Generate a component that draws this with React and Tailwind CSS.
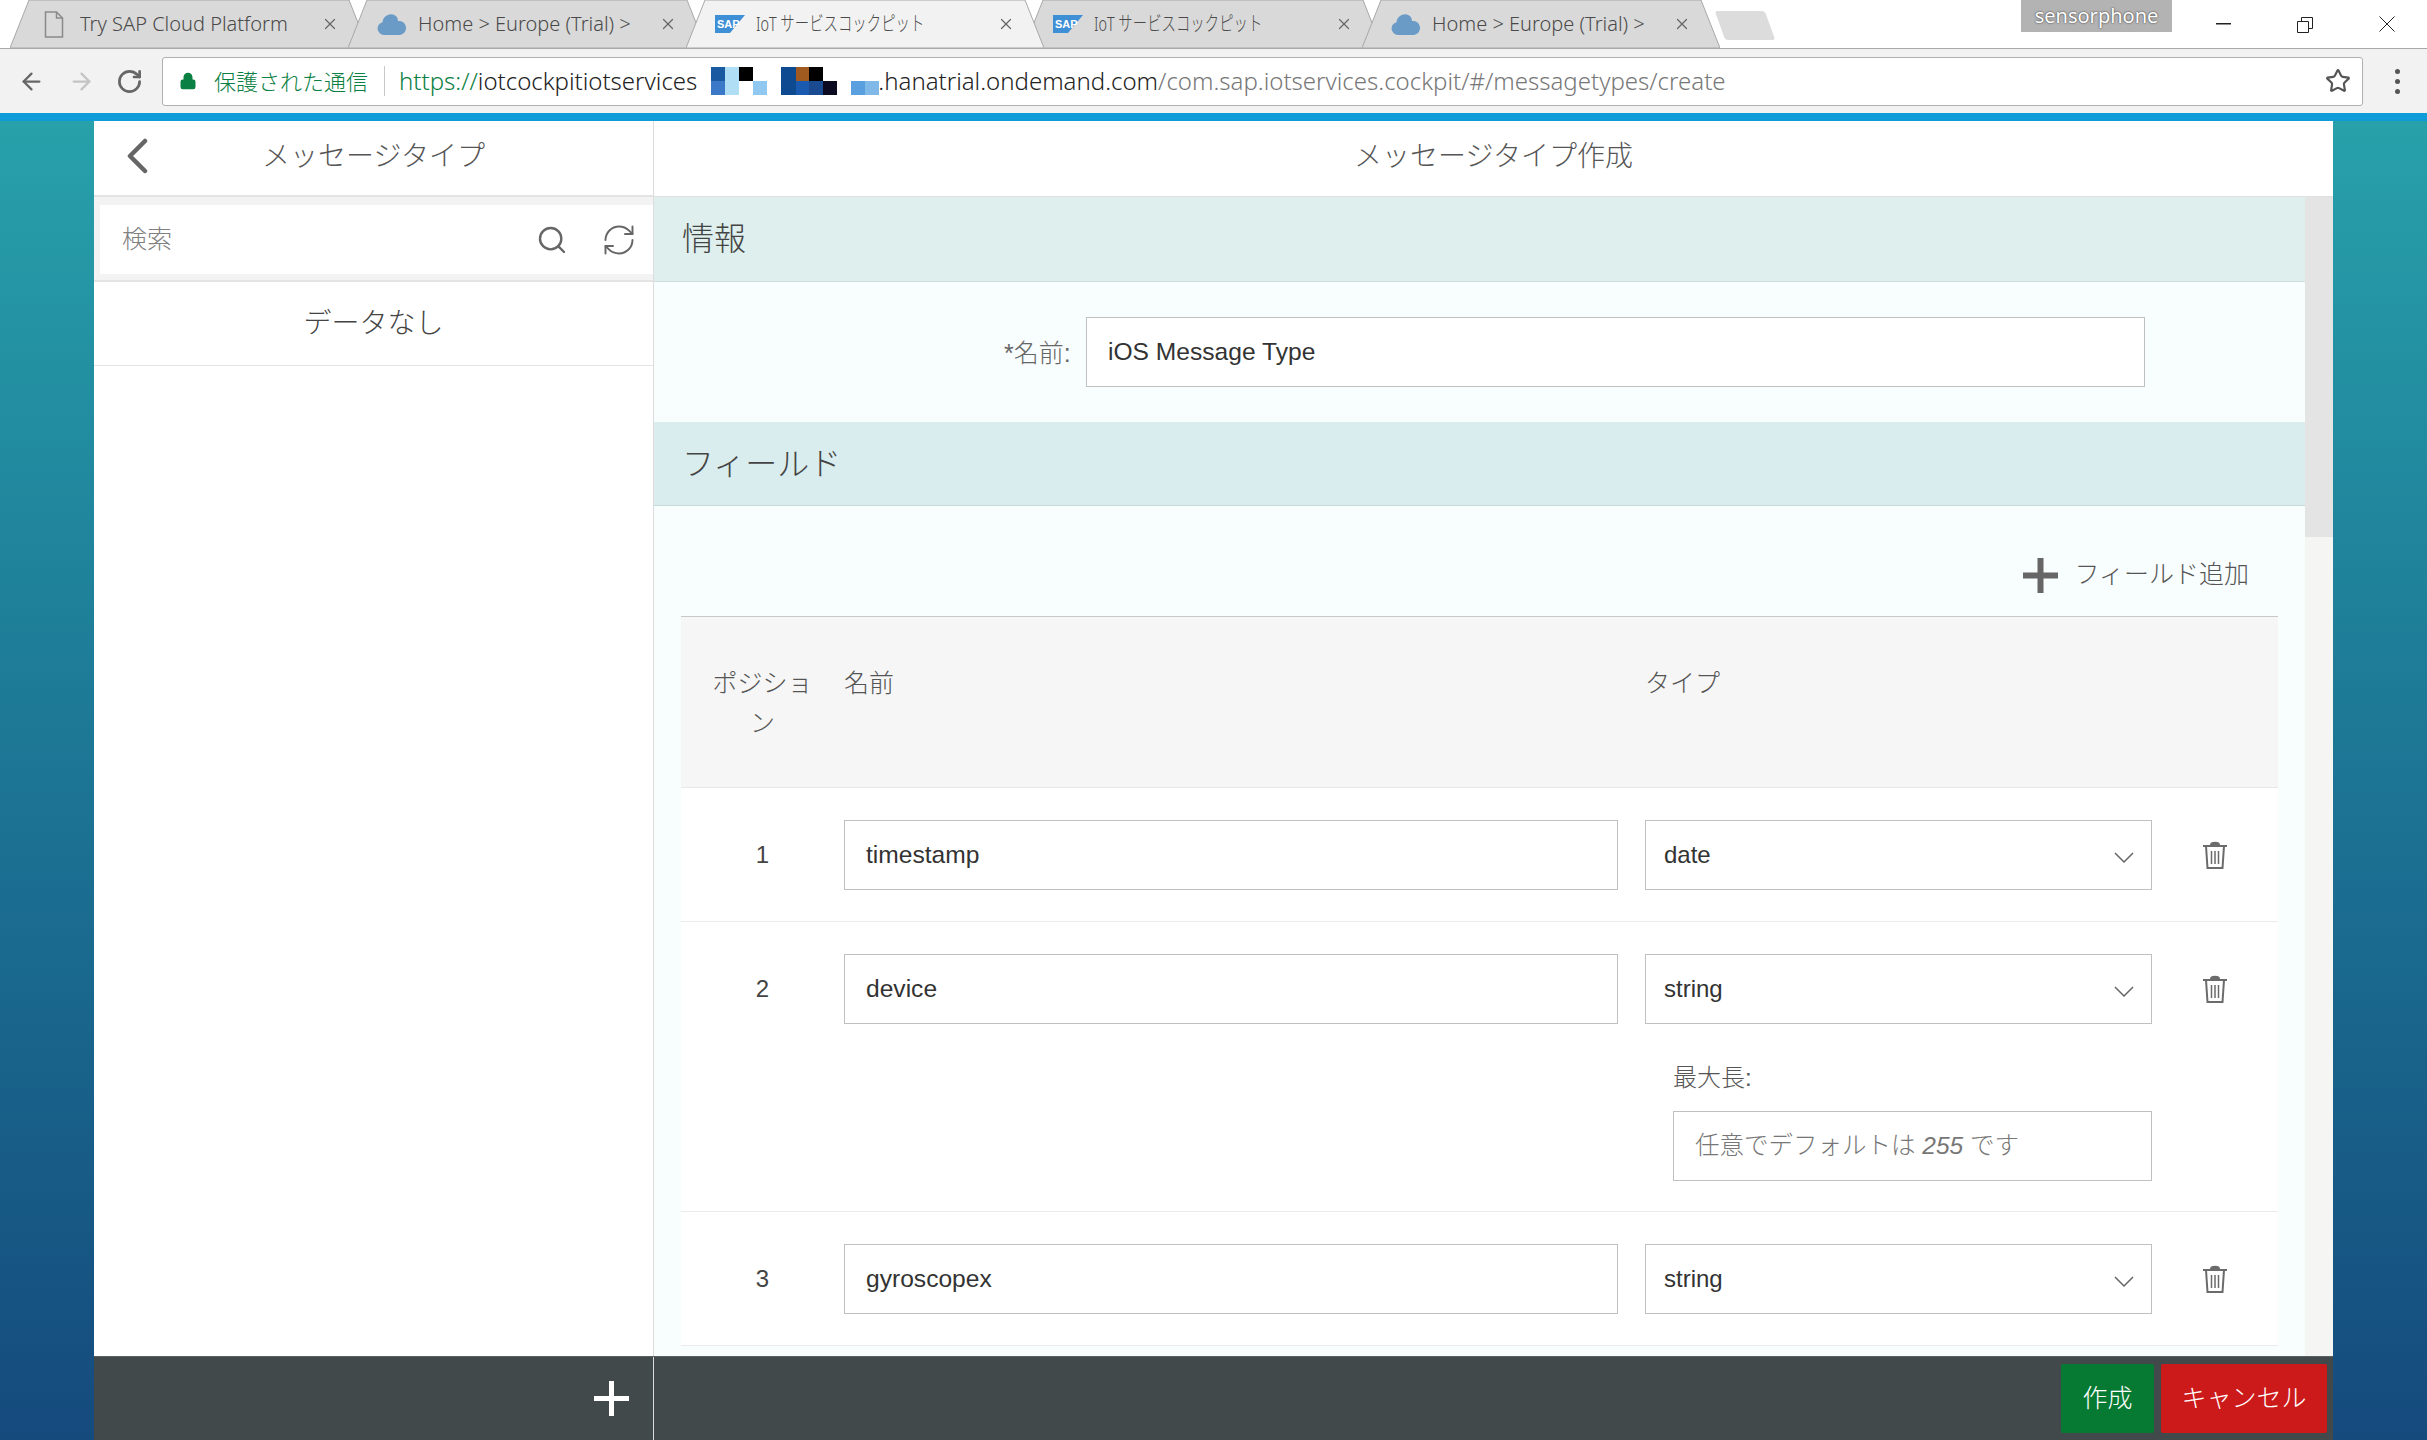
import React from "react";
import { ArrowLeft, ArrowRight, RotateCw, Star, Search, RefreshCw, X, Lock } from "lucide-react";

const tabs = [
  { title: "Try SAP Cloud Platform", icon: "page" },
  { title: "Home > Europe (Trial) >", icon: "cloud" },
  { title: "IoT サービスコックピット", icon: "sap", active: true, narrow: true },
  { title: "IoT サービスコックピット", icon: "sap", narrow: true },
  { title: "Home > Europe (Trial) >", icon: "cloud" },
];

const rows = [
  { pos: 1, name: "timestamp", type: "date" },
  { pos: 2, name: "device", type: "string", maxLength: true },
  { pos: 3, name: "gyroscopex", type: "string" },
];

function TabIcon({ icon }) {
  if (icon === "page") {
    return (
      <svg width="20" height="27" viewBox="0 0 20 27" fill="none" stroke="#8a8a8a" strokeWidth="1.5">
        <path d="M1.500 1h11l6 6v19h-17z" />
        <path d="M12.500 1v6h6" />
      </svg>
    );
  }
  if (icon === "cloud") {
    return (
      <svg width="30" height="24" viewBox="0 0 30 24" fill="#6a9ac6">
        <path d="M7 23a6.500 6.500 0 0 1-1.500-12.800A8.500 8.500 0 0 1 16 2.500a7 7 0 0 1 5 6.500 7 7 0 0 1 2 14z" />
      </svg>
    );
  }
  return (
    <svg width="30" height="18" viewBox="0 0 30 18">
      <path d="M0 0h30L15 18H0z" fill="#3f8fd6" />
      <text x="2" y="13" fontSize="11" fontWeight="700" fill="#fff" fontFamily="Liberation Sans, sans-serif">SAP</text>
    </svg>
  );
}

function Tab({ tab }) {
  return (
    <div className={`relative flex h-[48px] w-[358px] shrink-0 items-center pl-[29px] pr-[29px] -mr-[20px] ${tab.active ? "z-10" : ""}`}>
      <svg className="absolute inset-0 h-full w-full" viewBox="0 0 358 48" preserveAspectRatio="none">
        <path
          d="M0 48 L19 0 H339 L358 48 Z"
          fill={tab.active ? "#f2f2f2" : "#d9d9d9"}
          stroke="#a8a8a8"
          strokeWidth="1"
        />
      </svg>
      <div className="relative flex w-[30px] shrink-0 justify-center">
        <TabIcon icon={tab.icon} />
      </div>
      <div className="relative ml-[11px] min-w-0 flex-1">
        <span
          className={`inline-block origin-left whitespace-nowrap text-[20px] font-light text-[#4a4a4a] font-['Noto_Sans','Noto_Sans_CJK_JP',sans-serif] ${
            tab.narrow ? "scale-x-[0.72]" : ""
          }`}
        >
          {tab.title}
        </span>
      </div>
      <X className="relative shrink-0 text-[#666]" size={18} strokeWidth={1.6} />
    </div>
  );
}

function PixelBlocks() {
  return (
    <svg width="172" height="28" viewBox="0 0 172 28" className="shrink-0">
      <rect x="0" y="0" width="14" height="14" fill="#1a5aa0" />
      <rect x="0" y="14" width="14" height="14" fill="#3c78c8" />
      <rect x="14" y="0" width="14" height="28" fill="#b0def5" />
      <rect x="28" y="0" width="14" height="14" fill="#000" />
      <rect x="42" y="14" width="14" height="14" fill="#90c8f0" />
      <rect x="70" y="0" width="15" height="28" fill="#0d4a90" />
      <rect x="85" y="0" width="13" height="14" fill="#a05a20" />
      <rect x="85" y="14" width="13" height="14" fill="#1a5ab0" />
      <rect x="98" y="0" width="14" height="14" fill="#000" />
      <rect x="98" y="14" width="14" height="14" fill="#1a4a90" />
      <rect x="112" y="14" width="14" height="14" fill="#0a0a20" />
      <rect x="140" y="14" width="14" height="14" fill="#5aa0e0" />
      <rect x="154" y="14" width="14" height="14" fill="#80b8e8" />
    </svg>
  );
}

function TrashIcon() {
  return (
    <svg width="26" height="30" viewBox="0 0 26 30" fill="none" stroke="#6b6b6b" strokeWidth="2">
      <path d="M1 6h24" />
      <path d="M9 5c0-3 8-3 8 0" fill="#6b6b6b" />
      <path d="M4 6l1.500 22h15L22 6" />
      <path d="M9.500 11v13M13 11v13M16.500 11v13" strokeWidth="1.500" />
    </svg>
  );
}

function PlusIcon({ size, thickness, color }) {
  const a = (size - thickness) / 2;
  return (
    <svg width={size} height={size} viewBox={`0 0 ${size} ${size}`} fill={color} className="shrink-0">
      <rect x={a} y="0" width={thickness} height={size} />
      <rect x="0" y={a} width={size} height={thickness} />
    </svg>
  );
}

function BrowserChrome() {
  return (
    <div className="shrink-0">
      <div className="relative flex h-[48px] items-end bg-white pl-[10px]">
        {tabs.map((t, i) => (
          <Tab key={i} tab={t} />
        ))}
        <div className="ml-[20px] mb-[8px] h-[29px] w-[50px] skew-x-[20deg] rounded-[3px] bg-[#dcdcdc]" />
        <div className="ml-[251px] mb-[16px] flex h-[32px] w-[151px] items-center justify-center bg-[#b3b3b3] text-[20px] text-white [text-shadow:0_0_2px_#222] font-['Noto_Sans',sans-serif]">
          sensorphone
        </div>
        <div className="flex h-[48px] flex-1 items-start text-[#222]">
          <svg className="ml-[44px] mt-[23px]" width="15" height="2" viewBox="0 0 15 2" fill="#222">
            <rect width="15" height="1.500" />
          </svg>
          <svg className="ml-[66px] mt-[17px]" width="16" height="16" viewBox="0 0 16 16" fill="none" stroke="#222" strokeWidth="1">
            <path d="M0.500 4.500h11v11h-11z" />
            <path d="M4.500 4V0.500h11v11H12" />
          </svg>
          <svg className="ml-[66px] mt-[16px]" width="16" height="16" viewBox="0 0 16 16" stroke="#222" strokeWidth="1">
            <path d="M0.500 0.500l15 15M15.500 0.500l-15 15" />
          </svg>
        </div>
      </div>
      <div className="flex h-[65px] items-center border-t border-[#a8a8a8] bg-[#f2f2f2]">
        <ArrowLeft className="ml-[18px] text-[#666]" size={27} strokeWidth={2} />
        <ArrowRight className="ml-[23px] text-[#c4c4c4]" size={27} strokeWidth={2} />
        <RotateCw className="ml-[21px] text-[#666]" size={27} strokeWidth={2.4} />
        <div className="ml-[19px] flex h-[49px] w-[2201px] items-center rounded-[3px] border border-[#b0b0b0] bg-white pl-[16px] text-[24px] font-light font-['Noto_Sans','Noto_Sans_CJK_JP',sans-serif]">
          <Lock className="shrink-0 text-[#0b8043]" size={18} fill="#0b8043" strokeWidth={2} />
          <span className="ml-[17px] whitespace-nowrap text-[22px] text-[#0b8043]">保護された通信</span>
          <span className="ml-[16px] h-[30px] w-px bg-[#c8c8c8]" />
          <span className="ml-[14px] whitespace-nowrap text-[#0b8043]">https://</span>
          <span className="whitespace-nowrap text-[#222]">iotcockpitiotservices</span>
          <span className="ml-[14px]"><PixelBlocks /></span>
          <span className="-ml-[5px] whitespace-nowrap text-[#222]">.hanatrial.ondemand.com</span>
          <span className="whitespace-nowrap text-[#777]">/com.sap.iotservices.cockpit/#/messagetypes/create</span>
          <Star className="ml-auto mr-[11px] shrink-0 text-[#555]" size={26} strokeWidth={2} />
        </div>
        <div className="ml-[32px] flex flex-col gap-[5px]">
          <span className="h-[5px] w-[5px] rounded-full bg-[#555]" />
          <span className="h-[5px] w-[5px] rounded-full bg-[#555]" />
          <span className="h-[5px] w-[5px] rounded-full bg-[#555]" />
        </div>
      </div>
      <div className="h-[8px] bg-[#0f9ad8]" />
    </div>
  );
}

function ListPanel() {
  return (
    <div className="flex w-[560px] shrink-0 flex-col border-r border-[#dcdcdc] bg-white">
      <div className="relative flex h-[76px] items-center justify-center border-b-2 border-[#e4e4e4] pb-[2px]">
        <svg className="absolute left-[32px] top-[17px]" width="22" height="36" viewBox="0 0 22 36" fill="none" stroke="#666" strokeWidth="4.500" strokeLinecap="round" strokeLinejoin="round">
          <path d="M19 3L4 18l15 15" />
        </svg>
        <span className="text-[28px] font-light text-[#555]">メッセージタイプ</span>
      </div>
      <div className="h-[85px] border-b-2 border-[#e4e4e4] bg-[#f3f3f3] pl-[6px] pt-[8px] pb-[6px]">
        <div className="flex h-full items-center bg-white pl-[22px] pr-[16px]">
          <span className="flex-1 text-[25px] font-light text-[#808080]">検索</span>
          <Search className="text-[#666]" size={32} strokeWidth={1.8} />
          <RefreshCw className="ml-[33px] text-[#666]" size={36} strokeWidth={1.3} />
        </div>
      </div>
      <div className="flex h-[84px] items-center justify-center border-b border-[#e4e4e4] text-[28px] font-light text-[#444]">
        データなし
      </div>
    </div>
  );
}

function FieldRow({ row }) {
  return (
    <div className={`border-b border-[#ebebeb] bg-white pt-[32px] ${row.maxLength ? "pb-[30px]" : "pb-[31px]"}`}>
      <div className="flex items-center">
        <div className="w-[163px] shrink-0 text-center text-[24px] font-light text-[#444]">{row.pos}</div>
        <input
          readOnly
          value={row.name}
          className="h-[70px] w-[774px] shrink-0 border border-[#c0c0c0] bg-white px-[21px] text-[24.6px] text-[#333]"
        />
        <div className="ml-[27px] flex h-[70px] w-[507px] shrink-0 items-center justify-between border border-[#c0c0c0] pl-[18px] pr-[17px] text-[24px] text-[#333]">
          {row.type}
          <svg className="mt-[4px]" width="20" height="11" viewBox="0 0 20 11" fill="none" stroke="#666" strokeWidth="1.500">
            <path d="M1 1l9 9 9-9" />
          </svg>
        </div>
        <div className="flex flex-1 justify-center">
          <TrashIcon />
        </div>
      </div>
      {row.maxLength && (
        <div className="ml-[992px] mt-[38px] w-[479px]">
          <div className="text-[24px] font-light leading-[32px] text-[#555]">最大長:</div>
          <div className="mt-[17px] flex h-[70px] w-full items-center border border-[#c0c0c0] bg-white px-[21px] text-[24.5px] font-light text-[#777]">
            任意でデフォルトは&nbsp;<i>255</i>&nbsp;です
          </div>
        </div>
      )}
    </div>
  );
}

function FormPanel() {
  return (
    <div className="flex min-w-0 flex-1 flex-col bg-white">
      <div className="flex h-[76px] shrink-0 items-center justify-center border-b border-[#e0e0e0] pb-[4px] text-[28px] font-light text-[#555]">
        メッセージタイプ作成
      </div>
      <div className="flex min-h-0 flex-1">
        <div className="min-w-0 flex-1 overflow-hidden bg-[#f8fdfd]">
          <div className="flex h-[85px] items-center border-b border-[#cfdedd] bg-[#deefed] pl-[28px] text-[32px] font-light text-[#444]">
            情報
          </div>
          <div className="flex h-[140px] items-center pl-[350px]">
            <span className="w-[82px] shrink-0 pt-[3px] text-[25px] font-light text-[#666]">*名前:</span>
            <input
              readOnly
              value="iOS Message Type"
              className="h-[70px] w-[1059px] border border-[#c0c0c0] bg-white px-[21px] text-[24.6px] text-[#333]"
            />
          </div>
          <div className="flex h-[84px] items-center border-b border-[#c8d8da] bg-[#d9ecee] pl-[28px] text-[32px] font-light text-[#444]">
            フィールド
          </div>
          <div className="mx-[27px]">
            <div className="flex h-[111px] items-center justify-end border-b border-[#c8c8c8] pr-[29px] pt-[28px]">
              <PlusIcon size={35} thickness={6} color="#666" />
              <span className="ml-[16px] text-[25px] font-light text-[#555]">フィールド追加</span>
            </div>
            <div className="flex h-[171px] border-b border-[#e8e8e8] bg-[#f6f6f6] pt-[46px] text-[25px] font-light leading-[40px] text-[#555]">
              <div className="w-[163px] shrink-0 px-[24px] text-center">ポジション</div>
              <div className="w-[774px] shrink-0">名前</div>
              <div className="ml-[27px]">タイプ</div>
            </div>
            {rows.map((r) => (
              <FieldRow key={r.pos} row={r} />
            ))}
          </div>
        </div>
        <div className="w-[28px] shrink-0 bg-[#f5f5f3]">
          <div className="h-[340px] bg-[#e4e4e4]" />
        </div>
      </div>
    </div>
  );
}

export default function App() {
  return (
    <div className="flex h-[1440px] flex-col overflow-hidden bg-gradient-to-b from-[#2aa9ae] to-[#154a7d] font-['Liberation_Sans','Noto_Sans_CJK_JP',sans-serif]">
      <BrowserChrome />
      <div className="mx-[94px] flex min-h-0 flex-1 flex-col">
        <div className="flex min-h-0 flex-1">
          <ListPanel />
          <FormPanel />
        </div>
        <div className="flex h-[84px] shrink-0 border-t border-[#5a6062] bg-[#42494b]">
          <div className="flex w-[560px] items-center justify-end border-r border-[#dcdcdc] pr-[24px]">
            <PlusIcon size={35} thickness={5} color="#fff" />
          </div>
          <div className="flex flex-1 items-start justify-end gap-[7px] pr-[6px] pt-[7px]">
            <button className="h-[69px] w-[93px] rounded-[2px] bg-[#067a33] text-[25px] font-light text-white">作成</button>
            <button className="h-[69px] w-[166px] rounded-[2px] bg-[#cc1a1a] text-[25px] font-light text-white">キャンセル</button>
          </div>
        </div>
      </div>
    </div>
  );
}
